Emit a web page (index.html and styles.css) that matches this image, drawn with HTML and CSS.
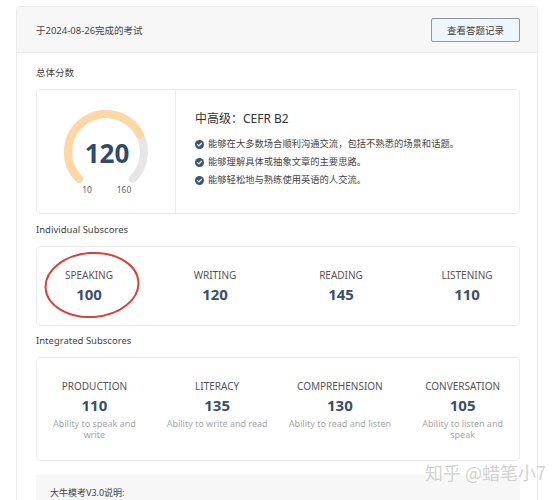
FILE: index.html
```html
<!DOCTYPE html>
<html lang="zh-CN">
<head>
<meta charset="utf-8">
<title>考试报告</title>
<link rel="stylesheet" href="styles.css">
</head>
<body>
<div class="page">
  <div class="report">
    <div class="report-head">
      <span class="exam-date">于2024-08-26完成的考试</span>
      <button class="btn-record" type="button">查看答题记录</button>
    </div>

    <div class="report-body">
      <div class="section-title">总体分数</div>
      <div class="panel overall">
        <div class="gauge-box">
          <svg class="gauge" width="100" height="100" viewBox="0 0 100 100">
            <path class="gauge-track" d="M23.13 76.87 A38 38 0 1 1 76.87 76.87"/>
            <path class="gauge-fill" d="M23.13 76.87 A38 38 0 1 1 83.86 32.75"/>
            <text class="gauge-value" x="51" y="60.5" text-anchor="middle">120</text>
            <text class="gauge-tick" x="31" y="90.5" text-anchor="middle">10</text>
            <text class="gauge-tick" x="68" y="90.5" text-anchor="middle">160</text>
          </svg>
        </div>
        <div class="level">
          <div class="level-title">中高级：CEFR B2</div>
          <ul class="level-list">
            <li><svg class="check" width="9" height="9" viewBox="0 0 10 10"><circle cx="5" cy="5" r="5"/><path d="M2.8 5.1 L4.4 6.6 L7.2 3.6"/></svg>能够在大多数场合顺利沟通交流，包括不熟悉的场景和话题。</li>
            <li><svg class="check" width="9" height="9" viewBox="0 0 10 10"><circle cx="5" cy="5" r="5"/><path d="M2.8 5.1 L4.4 6.6 L7.2 3.6"/></svg>能够理解具体或抽象文章的主要思路。</li>
            <li><svg class="check" width="9" height="9" viewBox="0 0 10 10"><circle cx="5" cy="5" r="5"/><path d="M2.8 5.1 L4.4 6.6 L7.2 3.6"/></svg>能够轻松地与熟练使用英语的人交流。</li>
          </ul>
        </div>
      </div>

      <div class="section-title">Individual Subscores</div>
      <div class="panel scores">
        <div class="score-row individual">
          <div class="score"><div class="score-name">SPEAKING</div><div class="score-value">100</div></div>
          <div class="score"><div class="score-name">WRITING</div><div class="score-value">120</div></div>
          <div class="score"><div class="score-name">READING</div><div class="score-value">145</div></div>
          <div class="score"><div class="score-name">LISTENING</div><div class="score-value">110</div></div>
        </div>
        <svg class="ring" width="98" height="70" viewBox="0 0 98 70">
          <ellipse cx="49" cy="35" rx="46.5" ry="32" transform="rotate(-4 49 35)"/>
        </svg>
      </div>

      <div class="section-title">Integrated Subscores</div>
      <div class="panel scores">
        <div class="score-row integrated">
          <div class="score"><div class="score-name">PRODUCTION</div><div class="score-value">110</div><div class="score-desc">Ability to speak and write</div></div>
          <div class="score"><div class="score-name">LITERACY</div><div class="score-value">135</div><div class="score-desc">Ability to write and read</div></div>
          <div class="score"><div class="score-name">COMPREHENSION</div><div class="score-value">130</div><div class="score-desc">Ability to read and listen</div></div>
          <div class="score"><div class="score-name">CONVERSATION</div><div class="score-value">105</div><div class="score-desc">Ability to listen and speak</div></div>
        </div>
      </div>

      <div class="notes">
        <p>大牛模考V3.0说明:</p>
      </div>
    </div>
  </div>
  <div class="watermark">知乎 @蜡笔小7</div>
</div>
</body>
</html>
```

FILE: styles.css
```css
* {
  box-sizing: border-box;
}

body {
  margin: 0;
  background: #fff;
  color: #444;
  font-family: "Noto Sans", "Noto Sans CJK SC", sans-serif;
}

.page {
  position: relative;
  height: 500px;
  overflow: hidden;
  padding: 6px 20px 0 16px;
}

/* outer report card */
.report {
  border: 1px solid #ebebeb;
  border-radius: 4px;
}

.report-head {
  height: 46px;
  display: flex;
  align-items: center;
  justify-content: space-between;
  padding: 0 17px 0 19px;
  background: #f7f7f7;
  border-bottom: 1px solid #ebebeb;
  border-radius: 4px 4px 0 0;
}

.exam-date {
  font-size: 9.5px;
  color: #444;
}

.btn-record {
  height: 24px;
  width: 89px;
  padding: 0;
  font-family: inherit;
  font-size: 9.5px;
  color: #3c3c3c;
  background: #eef6fb;
  border: 1px solid #8b97a3;
  border-radius: 2px;
}

.report-body {
  padding: 12px 17px 0 19px;
}

.section-title {
  font-size: 9.5px;
  line-height: 16px;
  color: #444;
  margin-bottom: 8px;
}

.panel {
  border: 1px solid #ececec;
  border-radius: 4px;
}

/* overall score */
.overall {
  display: flex;
  height: 125px;
  margin-bottom: 8px;
}

.gauge-box {
  width: 139px;
  flex: none;
  border-right: 1px solid #ececec;
  display: flex;
  align-items: center;
  justify-content: center;
}

.gauge-track,
.gauge-fill {
  fill: none;
  stroke-width: 8;
  stroke-linecap: round;
}

.gauge-track {
  stroke: #e6e6e6;
}

.gauge-fill {
  stroke: #fdd8a5;
}

.gauge-value {
  font-size: 26px;
  font-weight: 700;
  fill: #2f4a6c;
}

.gauge-tick {
  font-size: 8.5px;
  fill: #666;
}

.level {
  padding: 20px 0 0 19px;
}

.level-title {
  font-size: 12px;
  line-height: 18px;
  color: #333;
  margin-bottom: 7px;
}

.level-list {
  list-style: none;
  margin: 0;
  padding: 0;
}

.level-list li {
  display: flex;
  align-items: center;
  gap: 4px;
  font-size: 9.3px;
  line-height: 18px;
  color: #444;
}

.check {
  flex: none;
}

.check circle {
  fill: #3b5679;
}

.check path {
  fill: none;
  stroke: #fff;
  stroke-width: 1.3;
  stroke-linecap: round;
  stroke-linejoin: round;
}

/* subscores */
.scores {
  position: relative;
  margin-bottom: 7px;
}

.score-row {
  display: grid;
  grid-template-columns: repeat(4, 1fr);
  text-align: center;
}

.individual {
  margin: 0 -11px;
  padding: 21px 0;
}

.integrated {
  margin: 0 -5px 0 -4px;
  padding: 21px 0 20px;
}

.score-name {
  font-size: 10px;
  line-height: 14px;
  color: #555;
}

.score-value {
  margin-top: 2px;
  font-size: 15px;
  font-weight: 700;
  line-height: 20px;
  color: #3a4f6b;
}

.score-desc {
  max-width: 104px;
  margin: 3px auto 0;
  font-size: 9px;
  line-height: 11px;
  color: #a8a8a8;
}

/* hand-drawn highlight around the speaking score */
.ring {
  position: absolute;
  left: 6px;
  top: 3px;
}

.ring ellipse {
  fill: none;
  stroke: #d8423b;
  stroke-width: 2;
}

.notes {
  margin-top: 14px;
  background: #f7f7f7;
  padding: 12px 14px;
}

.notes p {
  margin: 0;
  font-size: 9px;
  line-height: 11px;
  color: #444;
}

.watermark {
  position: absolute;
  right: 12px;
  top: 459px;
  font-family: "Noto Sans CJK SC", sans-serif;
  font-size: 18px;
  color: rgba(165, 165, 165, 0.5);
  text-shadow: 0 0 1px #fff;
}
```
